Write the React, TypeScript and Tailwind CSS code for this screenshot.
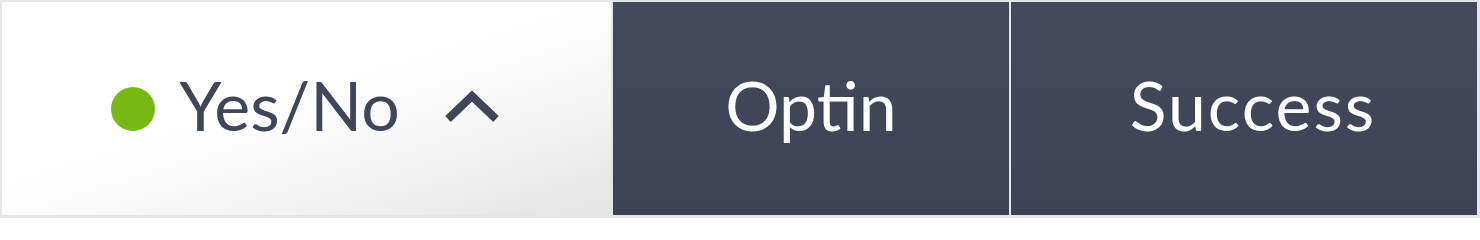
const STEPS = ["Optin", "Success"];

function StepTab({ label, className }: { label: string; className: string }) {
  return (
    <div
      className={`flex items-center justify-center bg-[linear-gradient(180deg,#444a5c,#3d4354)] text-[68px] leading-none text-white ${className}`}
    >
      <span className="-translate-y-[4px]">{label}</span>
    </div>
  );
}

function Caret() {
  return (
    <svg viewBox="0 0 56 32" className="h-[32px] w-[56px]" fill="none">
      <polyline
        points="4,28 28,5 52,28"
        stroke="#3f4657"
        strokeWidth={8}
        strokeLinejoin="miter"
        strokeLinecap="butt"
      />
    </svg>
  );
}

export default function App() {
  return (
    <div className="h-[218px] w-[1480px] bg-[#e4e5e8] p-[2px] pb-[3px] pr-[3px] font-['Lato','Open_Sans',sans-serif]">
      <div className="flex h-full gap-[2px]">
        <div className="flex w-[609px] items-center justify-center bg-[linear-gradient(163deg,#ffffff_45%,#f4f4f4_70%,#e3e3e4_100%)] pr-[2px]">
          <span className="h-[44px] w-[44px] rounded-full bg-[#77b814]" />
          <span className="ml-[24px] -translate-y-[4px] text-[68px] leading-none text-[#3f4657]">Yes/No</span>
          <span className="ml-[44px] -translate-y-[2px]">
            <Caret />
          </span>
        </div>
        <StepTab label={STEPS[0]} className="w-[396px]" />
        <StepTab label={STEPS[1]} className="flex-1 pl-[18px] tracking-[2px]" />
      </div>
    </div>
  );
}
